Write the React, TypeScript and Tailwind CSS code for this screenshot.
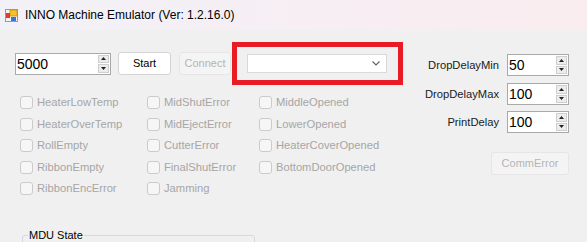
import React from "react";

const LEFT_COLS = [
  ["HeaterLowTemp", "HeaterOverTemp", "RollEmpty", "RibbonEmpty", "RibbonEncError"],
  ["MidShutError", "MidEjectError", "CutterError", "FinalShutError", "Jamming"],
  ["MiddleOpened", "LowerOpened", "HeaterCoverOpened", "BottomDoorOpened"],
];

const DELAYS = [
  { label: "DropDelayMin", value: "50" },
  { label: "DropDelayMax", value: "100" },
  { label: "PrintDelay", value: "100" },
];

function AppIcon() {
  return (
    <svg width="13" height="13" viewBox="0 0 13 13">
      <rect x="0.5" y="0.5" width="12" height="12" fill="#f4f4f4" stroke="#9a9a9a" />
      <rect x="5" y="1" width="7" height="6" fill="#f7c325" stroke="#c98f12" strokeWidth="0.8" />
      <rect x="1" y="4" width="4" height="5" fill="#e23a2e" />
      <rect x="6" y="8" width="5" height="4" fill="#3a74d6" />
    </svg>
  );
}

function Spinner() {
  return (
    <div className="flex h-full w-[12px] flex-col gap-[1px] py-[1px] pr-[1px]">
      <div className="flex flex-1 items-center justify-center border border-[#cfcfcf] bg-[#ececec]">
        <svg width="5" height="3" viewBox="0 0 5 3">
          <path d="M0 3 L2.5 0 L5 3 Z" fill="#222" />
        </svg>
      </div>
      <div className="flex flex-1 items-center justify-center border border-[#cfcfcf] bg-[#ececec]">
        <svg width="5" height="3" viewBox="0 0 5 3">
          <path d="M0 0 L2.5 3 L5 0 Z" fill="#222" />
        </svg>
      </div>
    </div>
  );
}

function NumBox({ value, width }: { value: string; width: string }) {
  return (
    <div className={`flex h-[22px] ${width} items-stretch border border-[#a9a9a9] bg-white`}>
      <span className="flex-1 pl-[1px] text-[14px] leading-[20px] text-black">{value}</span>
      <Spinner />
    </div>
  );
}

function Check({ label }: { label: string }) {
  return (
    <div className="flex h-[21.5px] items-center">
      <span className="h-[13px] w-[13px] rounded-[3px] border border-[#cbcbcb] bg-[#f6f6f6]" />
      <span className="ml-[4px] text-[11.2px] text-[#a6a6a6]">{label}</span>
    </div>
  );
}

export default function App() {
  return (
    <div className="h-[242px] w-[587px] overflow-hidden bg-[#f0f0f0] font-['Liberation_Sans',Arial,sans-serif]">
      {/* title bar */}
      <div className="flex h-[30px] items-center bg-gradient-to-r from-[#f2f1f8] to-[#faecef] pl-[5px]">
        <AppIcon />
        <span className="ml-[7px] text-[12px] text-black">INNO Machine Emulator (Ver: 1.2.16.0)</span>
      </div>

      <div className="flex pl-[15px] pt-[12px]">
        {/* left side */}
        <div className="w-[388px]">
          <div className="flex h-[43px] items-center">
            <NumBox value="5000" width="w-[96px]" />
            <button className="ml-[7px] h-[23px] w-[53px] rounded-[3px] border border-[#d4d4d4] bg-white text-[11px] text-black">
              Start
            </button>
            <button className="ml-[8px] h-[23px] w-[52px] rounded-[3px] border border-[#e6e6e6] bg-[#f4f4f4] text-[11px] text-[#b4b4b4]">
              Connect
            </button>
            <div className="ml-[1px] flex h-[43px] w-[171px] items-center border-[5px] border-[#e81c24] pl-[10px]">
              <div className="flex h-[19px] w-[140px] items-center justify-end border border-[#d9d9d9] bg-white pr-[6px]">
                <svg width="8" height="5" viewBox="0 0 8 5">
                  <path d="M0.5 0.5 L4 4 L7.5 0.5" fill="none" stroke="#606060" strokeWidth="1.1" />
                </svg>
              </div>
            </div>
          </div>

          <div className="ml-[5px] mt-[7px] grid grid-cols-[127px_112px_130px]">
            {LEFT_COLS.map((col, i) => (
              <div key={i} className="flex flex-col">
                {col.map((c) => (
                  <Check key={c} label={c} />
                ))}
              </div>
            ))}
          </div>

          <fieldset className="ml-[7px] mt-[29px] h-[40px] w-[233px] rounded-[3px] border border-[#d8d8d8] px-[5px]">
            <legend className="px-[1px] text-[11px] leading-[13px] text-black">MDU State</legend>
          </fieldset>
        </div>

        {/* right side */}
        <div className="ml-[20px] mt-[12px] flex w-[147px] flex-col">
          {DELAYS.map((d, i) => (
            <div key={d.label} className={`flex items-center ${i === 0 ? "" : i === 1 ? "mt-[7px]" : "mt-[6px]"}`}>
              <span className="w-[76px] text-right text-[11.2px] text-[#1a1a1a]">{d.label}</span>
              <div className="ml-[8px]">
                <NumBox value={d.value} width="w-[62px]" />
              </div>
            </div>
          ))}
          <div className="mt-[19px] flex justify-end pr-[1px]">
            <button className="h-[23px] w-[78px] rounded-[3px] border border-[#e6e6e6] bg-[#f4f4f4] text-[11px] text-[#b4b4b4]">
              CommError
            </button>
          </div>
        </div>
      </div>
    </div>
  );
}
